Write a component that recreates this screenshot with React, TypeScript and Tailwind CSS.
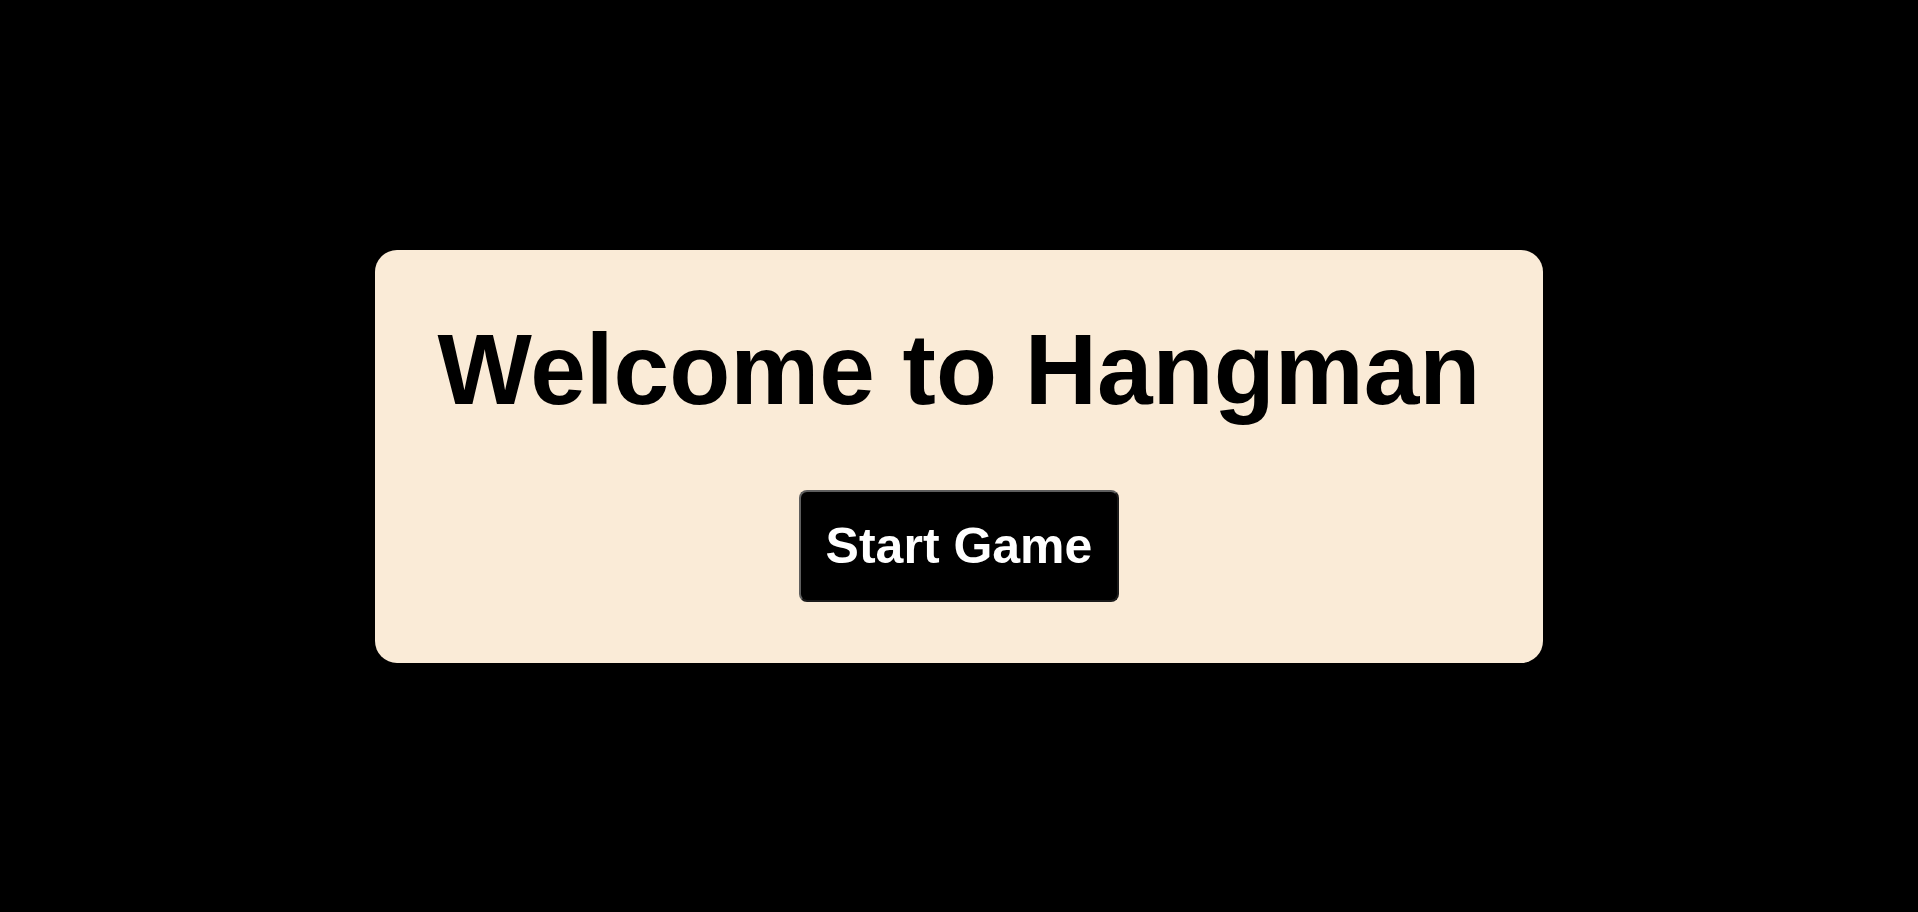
import React from "react";

export default function App() {
  return (
    <div
      className="h-[912px] w-full bg-black flex items-center justify-center"
      style={{ fontFamily: '"Liberation Sans", Arial, sans-serif' }}
    >
      <div className="w-[1168px] h-[413px] bg-[#faebd7] rounded-[22px] flex flex-col items-center pt-[62px] gap-[63px]">
        <h1 className="text-[100px] font-bold text-black leading-[115px] whitespace-nowrap">
          Welcome to Hangman
        </h1>
        <button className="h-[112px] px-[25px] bg-black text-white text-[50px] font-bold leading-[58px] rounded-[8px] border-2 border-t-[#5e5e5e] border-l-[#5e5e5e] border-r-[#1a1a1a] border-b-[#1a1a1a]">
          Start Game
        </button>
      </div>
    </div>
  );
}
